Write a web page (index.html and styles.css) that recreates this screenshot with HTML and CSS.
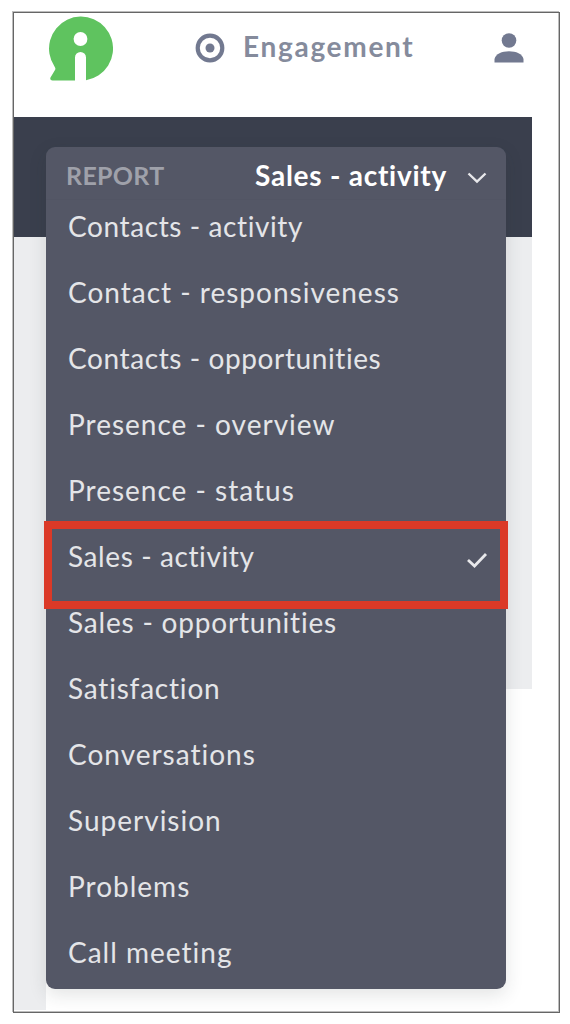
FILE: index.html
```html
<!DOCTYPE html>
<html lang="en">

<head>
    <meta charset="utf-8">
    <meta name="viewport" content="width=device-width,initial-scale=1.0">
    <title>Reports</title>
    <link rel="stylesheet" href="styles.css">
</head>

<body>
    <div class="frame">
        <header class="topbar">
            <svg class="logo" viewBox="0 0 66 66">
                <path fill="#5fc35f" d="M5.500 64.500 Q2.500 64 3.500 61.500 L8 54 Q9 52.500 7.500 50.500 A32 32 0 1 1 39 64.200 V41.500 A5.500 5.500 0 0 0 28 41.500 V64.500 Z" />
                <circle cx="33.500" cy="23" r="6.900" fill="#fff" />
            </svg>
            <div class="nav-item">
                <svg class="target" viewBox="0 0 30 30">
                    <circle cx="15" cy="15" r="12.300" fill="none" stroke="#727990" stroke-width="4.200" />
                    <circle cx="15" cy="15" r="4.500" fill="#727990" />
                </svg>
                <span class="nav-label">Engagement</span>
            </div>
            <svg class="user" viewBox="0 0 30 30">
                <circle cx="15" cy="7.500" r="7.300" fill="#727990" />
                <path fill="#727990" d="M0.500 29.500 V26 C1.500 21 8 18.300 15 18.300 S28.500 21 29.500 26 V29.500 Z" />
            </svg>
        </header>
        <main class="content">
            <div class="band"></div>
            <div class="page">
                <div class="page-block"></div>
            </div>

            <div class="dropdown">
                <div class="dropdown-header">
                    <span class="dropdown-label">REPORT</span>
                    <span class="dropdown-value">Sales - activity</span>
                    <svg class="icon" viewBox="0 0 22 16">
                        <path d="M2.500 4.500 L11 12.500 L19.500 4.500" />
                    </svg>
                </div>
                <ul class="options">
                    <li class="tight"><span>Contacts - activity</span></li>
                    <li><span>Contact - responsiveness</span></li>
                    <li class="tight"><span>Contacts - opportunities</span></li>
                    <li><span>Presence - overview</span></li>
                    <li><span>Presence - status</span></li>
                    <li class="selected tight">
                        <span>Sales - activity</span>
                        <svg class="icon check" viewBox="0 0 22 16">
                            <path d="M2 8 L8.500 14 L20 2" />
                        </svg>
                    </li>
                    <li class="medium"><span>Sales - opportunities</span></li>
                    <li class="medium"><span>Satisfaction</span></li>
                    <li><span>Conversations</span></li>
                    <li><span>Supervision</span></li>
                    <li><span>Problems</span></li>
                    <li><span>Call meeting</span></li>
                </ul>
            </div>
        </main>
    </div>
</body>

</html>
```
FILE: styles.css
```css
body {
    margin: 0;
    padding: 12px 0 0 13px;
    font-family: Lato, "Open Sans", sans-serif;
    background: #fff;
}

.frame {
    box-sizing: border-box;
    width: 547px;
    height: 1001px;
    border: 1px solid #666;
    box-shadow: -1px -1px 0 #bdbdbd, inset -1px -1px 0 #bdbdbd;
}

.topbar {
    display: flex;
    align-items: flex-start;
    box-sizing: border-box;
    width: 518px;
    height: 104px;
    padding: 3px 8px 0 33px;
}

.logo {
    width: 66px;
    height: 66px;
}

.nav-item {
    display: flex;
    align-items: center;
    margin: 12px auto 0 82px;
}

.target {
    width: 30px;
    height: 30px;
    margin-top: 4px;
}

.nav-label {
    margin-left: 18px;
    color: #858b9c;
    font-size: 28px;
    line-height: 36px;
    font-weight: bold;
    letter-spacing: 1.7px;
    white-space: nowrap;
}

.user {
    width: 30px;
    height: 30px;
    margin-top: 17px;
}

.content {
    position: relative;
    width: 518px;
}

.band {
    height: 120px;
    background: #3a3f4d;
}

.page {
    height: 773px;
    background: linear-gradient(to right, #ecedef 32px, #fff 32px);
}

.page-block {
    height: 452px;
    background: #ecedef;
}

/* open menu, lies over the band and the page */
.dropdown {
    position: absolute;
    top: 30px;
    left: 32px;
    width: 460px;
    height: 842px;
    border-radius: 9px;
    background: #545766;
    box-shadow: 0 6px 18px rgba(40, 50, 50, 0.13);
}

.dropdown-header {
    display: flex;
    align-items: center;
    box-sizing: border-box;
    height: 53px;
    padding: 4px 18px 0 20px;
    border-bottom: 1px solid #525564;
}

.dropdown-label {
    color: #9fa1aa;
    font-size: 25px;
    font-weight: bold;
    letter-spacing: 0.3px;
}

.dropdown-value {
    margin-left: auto;
    margin-right: 19px;
    color: #fff;
    font-size: 28px;
    font-weight: bold;
    letter-spacing: 0.75px;
    white-space: nowrap;
}

.icon {
    width: 22px;
    height: 16px;
    margin-top: 3px;
    fill: none;
    stroke: #e8e8eb;
    stroke-width: 2.4;
}

.options {
    list-style-type: none;
    margin: 0;
    padding: 0;
}

.options>li {
    position: relative;
    display: flex;
    align-items: center;
    box-sizing: border-box;
    height: 66px;
    padding: 0 18px 14px 22px;
    color: #e4e5e8;
    font-size: 28px;
    letter-spacing: 1px;
    white-space: nowrap;
}

.options>.tight {
    letter-spacing: 0.6px;
}

.options>.medium {
    letter-spacing: 0.8px;
}

.options>li:last-child {
    height: 63px;
    padding-bottom: 11px;
}

.check {
    margin: 7px 0 0 auto;
    stroke-width: 2.8;
}

/* red frame round the selected report */
.selected::after {
    content: "";
    position: absolute;
    box-sizing: border-box;
    top: -9px;
    left: -2px;
    width: 464px;
    height: 88px;
    border: 8px solid #db3927;
}
```
